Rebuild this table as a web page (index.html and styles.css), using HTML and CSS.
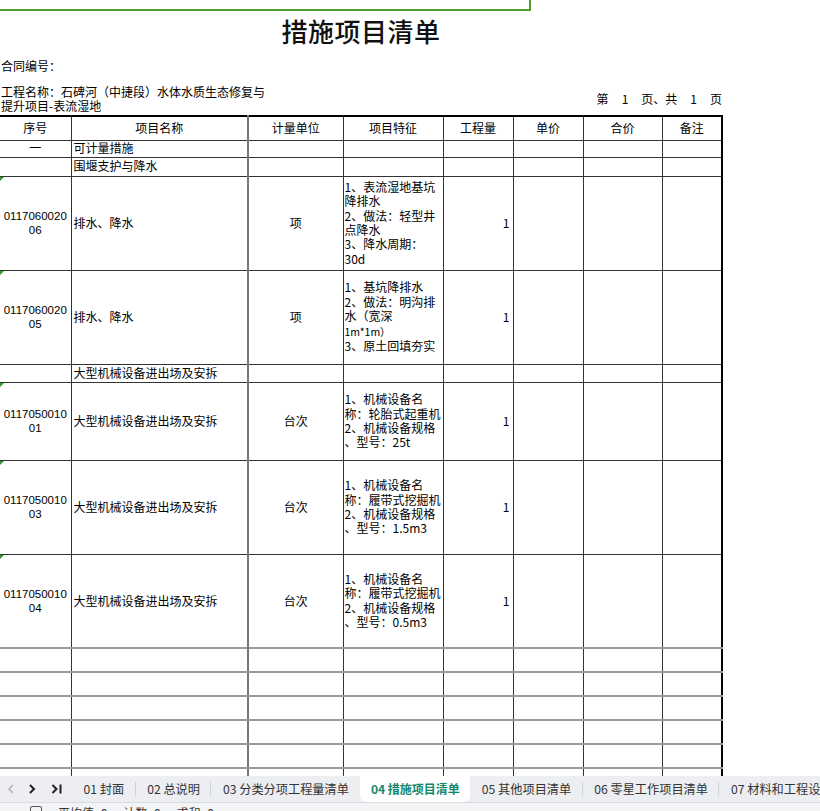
FILE: index.html
```html
<!DOCTYPE html>
<html lang="zh-CN">
<head>
<meta charset="utf-8">
<title>措施项目清单</title>
<link rel="stylesheet" href="styles.css">
</head>
<body>
<div class="app">
  <div class="sheet">
    <div class="sel-mark"></div>
    <h1 class="title">措施项目清单</h1>
    <div class="contract">合同编号：</div>
    <div class="meta">
      <div class="proj">工程名称：石碑河（中捷段）水体水质生态修复与<br>提升项目-表流湿地</div>
      <div class="page">第<span class="n">1</span>页、共<span class="n">1</span>页</div>
    </div>
    <table class="grid">
      <colgroup>
        <col class="c1"><col class="c2"><col class="c3"><col class="c4"><col class="c5"><col class="c6"><col class="c7"><col class="c8">
      </colgroup>
      <thead>
        <tr class="h24">
          <th class="first">序号</th><th>项目名称</th><th class="unit">计量单位</th><th>项目特征</th><th>工程量</th><th>单价</th><th>合价</th><th>备注</th>
        </tr>
      </thead>
      <tbody>
        <tr class="h17">
          <td class="first center">一</td><td class="name">可计量措施</td><td class="unit"></td><td></td><td></td><td></td><td></td><td></td>
        </tr>
        <tr class="h19">
          <td class="first"></td><td class="name">围堰支护与降水</td><td class="unit"></td><td></td><td></td><td></td><td></td><td></td>
        </tr>
        <tr class="h94">
          <td class="first code mark">0117060020<br>06</td><td class="name">排水、降水</td><td class="unit center">项</td><td class="feat">1、表流湿地基坑<br>降排水<br>2、做法：轻型井<br>点降水<br>3、降水周期：<br>30d</td><td class="qty">1</td><td></td><td></td><td></td>
        </tr>
        <tr class="h94">
          <td class="first code mark">0117060020<br>05</td><td class="name">排水、降水</td><td class="unit center">项</td><td class="feat">1、基坑降排水<br>2、做法：明沟排<br>水（宽深<br><span class="small">1m*1m）</span><br>3、原土回填夯实</td><td class="qty">1</td><td></td><td></td><td></td>
        </tr>
        <tr class="h18">
          <td class="first"></td><td class="name">大型机械设备进出场及安拆</td><td class="unit"></td><td></td><td></td><td></td><td></td><td></td>
        </tr>
        <tr class="h78">
          <td class="first code mark">0117050010<br>01</td><td class="name">大型机械设备进出场及安拆</td><td class="unit center">台次</td><td class="feat">1、机械设备名<br>称：轮胎式起重机<br>2、机械设备规格<br>、型号：25t</td><td class="qty">1</td><td></td><td></td><td></td>
        </tr>
        <tr class="h94">
          <td class="first code mark">0117050010<br>03</td><td class="name">大型机械设备进出场及安拆</td><td class="unit center">台次</td><td class="feat">1、机械设备名<br>称：履带式挖掘机<br>2、机械设备规格<br>、型号：1.5m3</td><td class="qty">1</td><td></td><td></td><td></td>
        </tr>
        <tr class="h94">
          <td class="first code mark">0117050010<br>04</td><td class="name">大型机械设备进出场及安拆</td><td class="unit center">台次</td><td class="feat">1、机械设备名<br>称：履带式挖掘机<br>2、机械设备规格<br>、型号：0.5m3</td><td class="qty">1</td><td></td><td></td><td></td>
        </tr>
        <tr class="h24 empty"><td class="first"></td><td></td><td class="unit"></td><td></td><td></td><td></td><td></td><td></td></tr>
        <tr class="h24 empty"><td class="first"></td><td></td><td class="unit"></td><td></td><td></td><td></td><td></td><td></td></tr>
        <tr class="h24 empty"><td class="first"></td><td></td><td class="unit"></td><td></td><td></td><td></td><td></td><td></td></tr>
        <tr class="h24 empty"><td class="first"></td><td></td><td class="unit"></td><td></td><td></td><td></td><td></td><td></td></tr>
        <tr class="h24 empty"><td class="first"></td><td></td><td class="unit"></td><td></td><td></td><td></td><td></td><td></td></tr>
        <tr class="h24 empty"><td class="first"></td><td></td><td class="unit"></td><td></td><td></td><td></td><td></td><td></td></tr>
      </tbody>
    </table>
  </div>
  <div class="tabbar">
    <div class="nav">
      <svg class="ico dim" width="8" height="10" viewBox="0 0 8 10"><path d="M6 1 L2 5 L6 9" fill="none" stroke="currentColor" stroke-width="1.5"/></svg>
      <svg class="ico" width="8" height="10" viewBox="0 0 8 10"><path d="M2 1 L6 5 L2 9" fill="none" stroke="currentColor" stroke-width="2"/></svg>
      <svg class="ico" width="11" height="10" viewBox="0 0 11 10"><path d="M1.5 1 L5.5 5 L1.5 9" fill="none" stroke="currentColor" stroke-width="2"/><path d="M9.5 0.5 V9.5" stroke="currentColor" stroke-width="2"/></svg>
    </div>
    <div class="tab">01 封面</div>
    <div class="tab">02 总说明</div>
    <div class="tab">03 分类分项工程量清单</div>
    <div class="tab active">04 措施项目清单</div>
    <div class="tab">05 其他项目清单</div>
    <div class="tab">06 零星工作项目清单</div>
    <div class="tab">07 材料和工程设备一览表</div>
  </div>
  <div class="status">
    <span class="st-ico"></span>
    <span>平均值=0</span><span>计数=0</span><span>求和=0</span>
  </div>
</div>
</body>
</html>
```
FILE: styles.css
```css
* { box-sizing: border-box; }
html, body { margin: 0; padding: 0; }
body {
  width: 820px;
  height: 811px;
  overflow: hidden;
  background: #fff;
  color: #000;
  font-family: "Noto Sans CJK SC", sans-serif;
}
.app { display: flex; flex-direction: column; height: 811px; }
.sheet { height: 776px; flex: none; overflow: hidden; }

.sel-mark {
  width: 531px;
  height: 11px;
  border-right: 2px solid #4f9d2f;
  border-bottom: 2px solid #4f9d2f;
}
.title {
  margin: 0;
  width: 722px;
  height: 40px;
  font-size: 26px;
  line-height: 40px;
  font-weight: 500;
  text-align: center;
  letter-spacing: 0.5px;
  color: #111;
}
.contract {
  margin-top: 8px;
  padding-left: 1px;
  font-size: 12px;
  line-height: 14px;
}
.meta {
  margin-top: 12px;
  width: 722px;
  display: flex;
  justify-content: space-between;
  align-items: center;
  font-size: 12px;
  line-height: 14px;
}
.proj { padding-left: 1px; }
.page .n { margin: 0 13px; }

.grid {
  margin-top: 2px;
  width: 722px;
  table-layout: fixed;
  border-collapse: collapse;
  border-top: 2px solid #000;
  border-right: 2px solid #000;
  font-size: 12px;
}
.c1 { width: 71px; }
.c2 { width: 177px; }
.c3 { width: 95px; }
.c4 { width: 100px; }
.c5 { width: 70px; }
.c6 { width: 70px; }
.c7 { width: 79px; }
.c8 { width: 60px; }

.grid th, .grid td {
  border: 1px solid #333;
  padding: 0 2px;
  font-weight: 400;
  line-height: 14.4px;
  vertical-align: middle;
  white-space: nowrap;
  overflow: hidden;
}
.grid th { text-align: center; font-size: 12px; }
.grid .first { border-left: none; }
.grid .unit { border-left: 2px solid #777; }
.grid .center { text-align: center; }
.grid .name { text-align: left; }
.grid .code {
  text-align: center;
  font-family: "Liberation Sans", Arial, sans-serif;
  font-size: 11.5px;
  line-height: 14px;
  position: relative;
}
.grid .mark::before {
  content: "";
  position: absolute;
  left: 0;
  top: 0;
  border-top: 4px solid #2e9a2e;
  border-right: 4px solid transparent;
}
.grid .feat { text-align: left; padding-left: 1px; }
.grid .qty { text-align: right; padding-right: 3px; }
.small { font-size: 10.5px; }

.h17 td { height: 17px; }
.h18 td, .h18 th { height: 18px; }
.h19 td { height: 19px; }
.h24 td, .h24 th { height: 24px; }
.h78 td { height: 78px; }
.h94 td { height: 94px; }
.empty td { border-top: 2px solid #9a9a9a; border-bottom: 2px solid #9a9a9a; }

.tabbar {
  height: 26px;
  flex: none;
  display: flex;
  align-items: center;
  background: #eceef1;
  font-size: 12.2px;
  color: #333;
  white-space: nowrap;
  overflow: hidden;
}
.nav {
  width: 72px;
  flex: none;
  display: flex;
  align-items: center;
  padding-left: 7px;
  gap: 15px;
  color: #222;
}
.nav .ico { display: block; }
.nav .dim { color: #b5b5b5; margin-right: -2px; }
.tab {
  position: relative;
  height: 26px;
  line-height: 26px;
  padding: 0 11.5px;
  flex: none;
}
.tab + .tab::before {
  content: "";
  position: absolute;
  left: -1px;
  top: 6px;
  height: 14px;
  border-left: 1px solid #cfd2d6;
}
.tab.active {
  background: #fff;
  color: #13876a;
  font-weight: 700;
  font-size: 12px;
  border-radius: 0 0 6px 6px;
  padding: 0 10.5px;
}
.tab.active::before, .tab.active + .tab::before { display: none; }

.status {
  flex: 1;
  display: flex;
  align-items: flex-start;
  gap: 16px;
  padding: 3px 0 0 30px;
  border-top: 1px solid #d9dbde;
  background: #f3f4f6;
  font-size: 12px;
  line-height: 14px;
  color: #333;
}
.st-ico {
  width: 12px;
  height: 12px;
  border: 1px solid #555;
  border-radius: 2px;
}
```
